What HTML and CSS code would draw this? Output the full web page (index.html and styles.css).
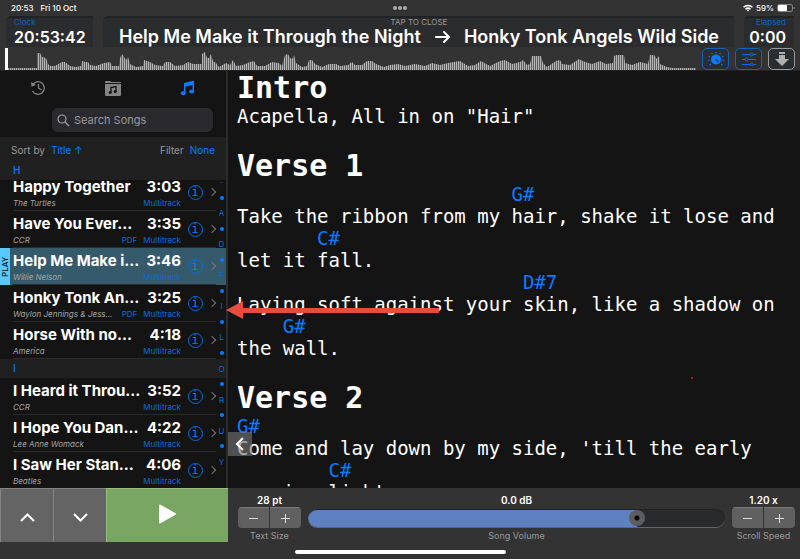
FILE: index.html
```html
<!DOCTYPE html>
<html lang="en">

<head>
    <meta charset="UTF-8">
    <meta name="viewport" content="width=device-width, initial-scale=1.0">
    <title>Songs</title>
    <link rel="stylesheet" href="styles.css">
</head>

<body>
    <header class="top">
        <div class="status">
            <span>20:53</span>
            <span>Fri 10 Oct</span>
            <span class="dots"><i></i><i></i><i></i></span>
            <span class="battery">
                <svg width="10" height="8" viewBox="0 0 20 15" fill="none" stroke="#fff" stroke-width="3">
                    <path d="M1 6a13 13 0 0 1 18 0M5 10a7.500 7.500 0 0 1 10 0" />
                    <path d="M7.500 11.500L10 14.500l2.500-3a4 4 0 0 0-5 0z" fill="#fff" stroke="none" />
                </svg>
                59%
                <svg width="18" height="8" viewBox="0 0 18 8">
                    <rect x=".5" y=".5" width="15" height="7" rx="2" fill="none" stroke="#8a8a8a" />
                    <rect x="1" y="1" width="9" height="6" rx="1" fill="#fff" />
                    <path d="M17 3v2" stroke="#8a8a8a" />
                </svg>
            </span>
        </div>

        <div class="displays">
            <div class="display clock"><small>Clock</small><b>20:53:42</b></div>
            <button class="display now">
                <small>TAP TO CLOSE</small>
                <span class="songs">
                    <b>Help Me Make it Through the Night</b>
                    <svg width="15" height="14" viewBox="0 0 15 14" fill="none" stroke="#fff" stroke-width="2" stroke-linecap="round" stroke-linejoin="round"><path d="M1 7h13M9 2l5 5-5 5" /></svg>
                    <b>Honky Tonk Angels Wild Side</b>
                </span>
            </button>
            <div class="display elapsed"><small>Elapsed</small><b>0:00</b></div>
        </div>

        <div class="wave-row">
            <!-- waveform: an envelope filled with narrow bars -->
            <svg class="wave" viewBox="0 0 696 23" preserveAspectRatio="none">
                <defs>
                    <pattern id="bars" width="2" height="23" patternUnits="userSpaceOnUse">
                        <rect width="2" height="23" fill="#606060" />
                        <rect width="1" height="23" fill="#b4b4b4" />
                    </pattern>
                </defs>
                <path fill="url(#bars)" d="M8 23V21H37V6L40 6 42 10 46 11 48 17 50 19 55 19 62 15 65 15 70 19 76 20 81 19 82 14 85 15 88 15 90 18 96 19 104 16 110 15 112 19 119 19 120 11 122 7 124 10 126 13 128 10 130 17 136 20 143 19 144 13 150 15 155 18 163 19 165 15 170 15 175 19 183 18 188 15 193 17 202 17 202 7 205 5 207 11 209 11 211 7 213 14 216 16 219 20 226 16 230 18 233 13 236 19 243 18 250 15 254 14 257 19 265 19 272 15 279 16 282 19 285 8 288 7 290 11 292 12 294 8 296 16 302 20 307 19 309 13 312 13 315 17 322 20 329 17 336 17 340 19 348 18 352 15 355 18 362 18 367 14 372 14 376 17 384 20 390 18 398 17 405 19 415 17 425 19 432 16 440 18 448 16 460 14 468 19 475 18 481 14 490 19 500 14 505 13 512 17 520 15 523 13 527 18 530 17 532 9 541 9 543 16 547 20 556 14 560 13 562 17 570 18 579 12 585 15 592 17 600 14 606 17 613 16 614 9 617 8 624 8 625 16 632 18 640 15 648 17 650 8 654 8 657 12 659 9 660 17 667 20 672 21 696 21V23z" />
                <rect x="5" y="1" width="3" height="22" fill="#fff" />
            </svg>
            <div class="tools">
                <button class="tool" aria-label="Brightness">
                    <svg width="18" height="16" viewBox="0 0 18 16">
                        <circle cx="9" cy="8.500" r="5" fill="#0a7bff" />
                        <path d="M8.500 8l3 3" stroke="#20405f" stroke-width="1.400" />
                        <g fill="#0a7bff">
                            <circle cx="9" cy="1.500" r=".8" /><circle cx="5" cy="2.500" r=".8" /><circle cx="13" cy="2.500" r=".8" />
                            <circle cx="2.300" cy="5.500" r=".8" /><circle cx="15.700" cy="5.500" r=".8" /><circle cx="1.800" cy="9.500" r=".8" />
                            <circle cx="16.200" cy="9.500" r=".8" /><circle cx="3.300" cy="13.500" r=".8" /><circle cx="14.700" cy="13.500" r=".8" />
                        </g>
                    </svg>
                </button>
                <button class="tool" aria-label="Mixer">
                    <svg width="16" height="14" viewBox="0 0 16 14" fill="#26323f" stroke="#0a6fe6">
                        <path d="M1 2.500h14M1 7.500h14M1 12.500h14" />
                        <circle cx="10.500" cy="2.500" r="1.500" /><circle cx="5.500" cy="7.500" r="1.500" /><circle cx="10.500" cy="12.500" r="1.500" />
                    </svg>
                </button>
                <button class="tool grey" aria-label="Scroll down">
                    <svg width="16" height="16" viewBox="0 0 16 16" fill="#b0b0b0"><path d="M5 1h6v2H5zM5 4h6v4h4l-7 7-7-7h4z" /></svg>
                </button>
            </div>
        </div>
    </header>

    <main class="main">
        <aside class="side">
            <nav class="tabs">
                <button aria-label="History">
                    <svg width="16" height="16" viewBox="0 0 16 16" fill="none" stroke="#858585" stroke-width="1.300"><path d="M2.500 5A6.300 6.300 0 1 1 2.500 11M8.500 4v4l3 2" /><path d="M1 2l.5 4.500L6 5z" fill="#858585" stroke="none" /></svg>
                </button>
                <button aria-label="Set lists">
                    <svg width="16" height="16" viewBox="0 0 16 16"><path d="M0 3V2q0-1 1-1h4l1 1h9q1 0 1 1z" fill="#858585" /><path d="M0 4h16v11q0 1-1 1H1q-1 0-1-1z" fill="#858585" /><path d="M6 12.500V7.500l5-1v5" stroke="#141414" stroke-width="1.300" fill="none" /><circle cx="5.200" cy="12.500" r="1.500" fill="#141414" /><circle cx="10.200" cy="11.500" r="1.500" fill="#141414" /></svg>
                </button>
                <button aria-label="Songs">
                    <svg width="16" height="16" viewBox="0 0 16 16" fill="#0a7bff"><path d="M4 3l10-2.500V11h-1.500V5L5.500 6.600V13H4z" /><ellipse cx="3.200" cy="13.300" rx="2.500" ry="2" /><ellipse cx="11.700" cy="11.500" rx="2.500" ry="2" /></svg>
                </button>
            </nav>
            <label class="search">
                <svg width="13" height="13" viewBox="0 0 13 13" fill="none" stroke="#a0a0a5" stroke-width="1.200"><circle cx="5" cy="5" r="4" /><path d="M8 8l4 4" /></svg>
                <input type="search" placeholder="Search Songs" aria-label="Search Songs">
            </label>
            <div class="sort">
                <span>Sort by</span><button>Title ↑</button>
                <span class="filter">Filter</span><button>None</button>
            </div>
            <h2 class="letter">H</h2>

            <div class="list-wrap">
                <ul class="list">
                    <li class="song">
                        <b class="name">Happy Together</b><b class="time">3:03</b>
                        <em>The Turtles</em><span class="tags">Multitrack</span>
                        <a class="info" href="#" aria-label="Info">i</a><i class="chev"></i>
                    </li>
                    <li class="song">
                        <b class="name">Have You Ever…</b><b class="time">3:35</b>
                        <em>CCR</em><span class="tags"><span>PDF</span>Multitrack</span>
                        <a class="info" href="#" aria-label="Info">i</a><i class="chev"></i>
                    </li>
                    <li class="song active">
                        <button class="play-tab">PLAY</button>
                        <b class="name">Help Me Make i…</b><b class="time">3:46</b>
                        <em>Willie Nelson</em><span class="tags">Multitrack</span>
                        <a class="info" href="#" aria-label="Info">i</a><i class="chev"></i>
                    </li>
                    <li class="song">
                        <b class="name">Honky Tonk An…</b><b class="time">3:25</b>
                        <em>Waylon Jennings &amp; Jess…</em><span class="tags"><span>PDF</span>Multitrack</span>
                        <a class="info" href="#" aria-label="Info">i</a><i class="chev"></i>
                    </li>
                    <li class="song">
                        <b class="name">Horse With no…</b><b class="time">4:18</b>
                        <em>America</em><span class="tags">Multitrack</span>
                        <a class="info" href="#" aria-label="Info">i</a><i class="chev"></i>
                    </li>
                    <li class="letter">I</li>
                    <li class="song">
                        <b class="name">I Heard it Throu…</b><b class="time">3:52</b>
                        <em>CCR</em><span class="tags">Multitrack</span>
                        <a class="info" href="#" aria-label="Info">i</a><i class="chev"></i>
                    </li>
                    <li class="song">
                        <b class="name">I Hope You Dan…</b><b class="time">4:22</b>
                        <em>Lee Anne Womack</em><span class="tags">Multitrack</span>
                        <a class="info" href="#" aria-label="Info">i</a><i class="chev"></i>
                    </li>
                    <li class="song">
                        <b class="name">I Saw Her Stan…</b><b class="time">4:06</b>
                        <em>Beatles</em><span class="tags">Multitrack</span>
                        <a class="info" href="#" aria-label="Info">i</a><i class="chev"></i>
                    </li>
                </ul>
                <div class="index">
                    <span>·</span><i></i><span>A</span><i></i><span>D</span><i></i><span>F</span><i></i><span>I</span><i></i><span>L</span><i></i><span>O</span><i></i><span>R</span><i></i><span>U</span><i></i><span>Y</span>
                </div>
            </div>
        </aside>

        <section class="lyrics">
            <h1>Intro</h1>
            <pre>Acapella, All in on "Hair"</pre>
            <h1>Verse 1</h1>
            <pre><span>                        G#</span>
Take the ribbon from my hair, shake it lose and
<span>       C#</span>
let it fall.
<span>                         D#7</span>
Laying soft against your skin, like a shadow on
<span>    G#</span>
the wall.</pre>
            <h1>Verse 2</h1>
            <pre><span>G#</span>
Come and lay down by my side, 'till the early
<span>        C#</span>
morning light.</pre>
            <button class="collapse" aria-label="Hide song list">
                <svg width="10" height="14" viewBox="0 0 10 14" fill="none" stroke="#fff" stroke-width="2"><path d="M8 1L2 7l6 6" /></svg>
            </button>
            <i class="speck"></i>
        </section>
        <svg class="arrow" width="213" height="18" viewBox="0 0 213 18" fill="#e74c3c"><path d="M0 9L17 0v7h196v5H17v6z" /></svg>
    </main>

    <footer class="bottom">
        <div class="transport">
            <button aria-label="Previous"><svg width="15" height="9" viewBox="0 0 15 9" fill="none" stroke="#fff" stroke-width="2"><path d="M1 8l6.500-6.500L14 8" /></svg></button>
            <button aria-label="Next"><svg width="15" height="9" viewBox="0 0 15 9" fill="none" stroke="#fff" stroke-width="2"><path d="M1 1l6.500 6.500L14 1" /></svg></button>
            <button class="play" aria-label="Play"><svg width="17" height="20" viewBox="0 0 17 20" fill="#fff" stroke="#fff" stroke-width="2" stroke-linejoin="round"><path d="M1 1.500v17L16 10z" /></svg></button>
        </div>
        <div class="controls">
            <div class="control">
                <b>28 pt</b>
                <div class="stepper">
                    <button aria-label="Smaller text"><svg width="11" height="11" viewBox="0 0 11 11" stroke="#ddd"><path d="M1 5.500h9" /></svg></button>
                    <button aria-label="Larger text"><svg width="11" height="11" viewBox="0 0 11 11" stroke="#ddd"><path d="M1 5.500h9M5.500 1v9" /></svg></button>
                </div>
                <small>Text Size</small>
            </div>
            <div class="control volume">
                <b>0.0 dB</b>
                <input type="range" id="volume" min="0" max="100" value="80">
                <label for="volume">Song Volume</label>
            </div>
            <div class="control">
                <b>1.20 x</b>
                <div class="stepper">
                    <button aria-label="Slower"><svg width="11" height="11" viewBox="0 0 11 11" stroke="#ddd"><path d="M1 5.500h9" /></svg></button>
                    <button aria-label="Faster"><svg width="11" height="11" viewBox="0 0 11 11" stroke="#ddd"><path d="M1 5.500h9M5.500 1v9" /></svg></button>
                </div>
                <small>Scroll Speed</small>
            </div>
        </div>
        <i class="home-bar"></i>
    </footer>
</body>
</html>
```

FILE: styles.css
```css
* {
    box-sizing: border-box;
}

body {
    display: flex;
    flex-direction: column;
    height: 100vh;
    margin: 0;
    overflow: hidden;
    background: #141414;
    color: #fff;
    font-family: Inter, "Liberation Sans", sans-serif;
}

button {
    padding: 0;
    border: none;
    background: none;
    color: inherit;
    font: inherit;
}

small {
    font-size: 9px;
}

b {
    font-weight: 600;
}

/* header */
.top {
    background: #333;
    border-bottom: 1px solid #222;
}

.status {
    position: relative;
    display: flex;
    align-items: center;
    gap: 7px;
    height: 16px;
    padding: 0 5px 0 11px;
    font-size: 8px;
    font-weight: 500;
}

.dots {
    position: absolute;
    left: 50%;
    display: flex;
    gap: 1px;
    margin-left: -7px;
}

.dots i {
    width: 4px;
    height: 4px;
    border-radius: 50%;
    background: #aaa;
}

.battery {
    display: flex;
    align-items: center;
    gap: 3px;
    margin-left: auto;
}

.displays {
    display: flex;
    gap: 10px;
    height: 31px;
    padding: 0 6px;
}

.display {
    display: flex;
    flex-direction: column;
    border-top: 2px solid #202224;
    border-left: 1px solid #292b2d;
    border-radius: 5px 0 0 0;
    background: #2b2c2e;
}

.display small {
    height: 9px;
    color: #0b63c4;
    font-size: 8px;
    line-height: 9px;
}

.display b {
    font-size: 16px;
    line-height: 20px;
}

.clock {
    width: 87px;
    padding-left: 7px;
}

.now {
    flex: 1;
    align-items: center;
}

.display.now small {
    color: #999;
}

.songs {
    display: flex;
    align-items: center;
    gap: 14px;
    white-space: nowrap;
}

.display.now b {
    font-size: 18px;
}

.elapsed {
    width: 50px;
    padding-right: 8px;
    text-align: right;
}

.wave-row {
    display: flex;
    height: 23px;
}

.wave {
    flex: 1;
    min-width: 0;
    height: 23px;
}

.tools {
    display: flex;
    gap: 6px;
    padding: 1px 5px 0 6px;
}

.tool {
    display: flex;
    align-items: center;
    justify-content: center;
    width: 27px;
    height: 22px;
    border: 1px solid #1762b8;
    border-radius: 5px;
    background: #2b2e31;
}

.grey {
    border-color: #999;
}

/* song list */
.main {
    position: relative;
    display: flex;
    flex: 1;
    min-height: 0;
}

.side {
    display: flex;
    flex-direction: column;
    width: 228px;
    border-right: 2px solid #2c2c2c;
}

.tabs {
    display: flex;
    justify-content: space-around;
    height: 36px;
    padding-bottom: 3px;
}

.tabs button {
    display: flex;
    align-items: center;
    justify-content: center;
    width: 40px;
}

.search {
    display: flex;
    align-items: center;
    gap: 4px;
    height: 24px;
    margin: 1px 13px 5px 52px;
    padding: 0 5px;
    border-radius: 6px;
    background: #2a2a2e;
}

.search input {
    flex: 1;
    min-width: 0;
    padding: 0;
    border: none;
    outline: none;
    background: none;
    color: #fff;
    font: 11px Inter, sans-serif;
}

.search input::placeholder {
    color: #98989f;
}

.sort {
    display: flex;
    align-items: center;
    gap: 6px;
    height: 24px;
    padding: 2px 11px 0 11px;
    background: #202020;
    color: #999;
    font-size: 10px;
}

.sort button {
    color: #0a7bff;
}

.filter {
    margin-left: auto;
}

.letter {
    flex: none;
    height: 19px;
    margin: 0;
    padding-left: 13px;
    background: #202020;
    color: #0a7bff;
    font-size: 10px;
    font-weight: 500;
    line-height: 19px;
}

.list-wrap {
    position: relative;
    flex: 1;
    overflow: hidden;
}

/* scrolled a little past the first song */
.list {
    margin: -6px 0 0;
    padding: 0;
    list-style: none;
}

.song {
    position: relative;
    display: grid;
    grid-template: 23px 13px / minmax(0, 1fr) 38px 28px 12px;
    height: 37px;
    padding: 0 5px 0 13px;
    white-space: nowrap;
}

.song::after {
    content: "";
    position: absolute;
    right: 10px;
    bottom: 0;
    left: 13px;
    height: 1px;
    background: #2b2b2b;
}

.name,
.time {
    font-size: 15px;
    font-weight: 700;
    line-height: 25px;
}

.time {
    grid-column: 2;
    text-align: right;
}

.song em {
    grid-row: 2;
    grid-column: 1;
    color: #a5a5a5;
    font-size: 8px;
    line-height: 12px;
}

.tags {
    grid-row: 2;
    grid-column: 2;
    justify-self: end;
    color: #0a6bdc;
    font-size: 8px;
    line-height: 12px;
}

.tags span {
    margin-right: 6px;
}

.info {
    grid-row: 1 / 3;
    grid-column: 3;
    place-self: center;
    width: 15px;
    height: 15px;
    border: 1px solid #0a6bdc;
    border-radius: 50%;
    color: #0a7bff;
    font: 12px/13px "DejaVu Sans Mono", monospace;
    text-align: center;
    text-decoration: none;
}

.chev {
    grid-row: 1 / 3;
    grid-column: 4;
    align-self: center;
    width: 6px;
    height: 6px;
    border: solid #777;
    border-width: 1px 1px 0 0;
    transform: rotate(45deg);
}

.active {
    background: #345a6c;
}

.play-tab {
    position: absolute;
    top: 0;
    bottom: 0;
    left: 0;
    width: 10px;
    background: #5ac8fa;
    color: #111;
    font-size: 8px;
    font-weight: 500;
    line-height: 10px;
    writing-mode: vertical-rl;
    transform: rotate(180deg);
}

.index {
    position: absolute;
    top: -4px;
    right: 0;
    display: flex;
    flex-direction: column;
    align-items: center;
    justify-content: space-between;
    width: 9px;
    height: 292px;
    color: #0a6bdc;
    font-size: 8px;
    line-height: 12px;
}

.index i {
    width: 4px;
    height: 4px;
    border-radius: 50%;
    background: #0a7bff;
}

/* lyrics */
.lyrics {
    position: relative;
    flex: 1;
    min-width: 0;
    padding-left: 9px;
    overflow: hidden;
    font-family: "DejaVu Sans Mono", monospace;
}

.lyrics h1 {
    margin: 0;
    font-size: 30px;
    line-height: 34px;
}

.lyrics pre {
    margin: 0 0 22px;
    font: 19px/22px "DejaVu Sans Mono", monospace;
}

.lyrics pre span {
    color: #0a7bff;
}

.collapse {
    position: absolute;
    bottom: 32px;
    left: 0;
    display: flex;
    align-items: center;
    justify-content: center;
    width: 24px;
    height: 24px;
    background: rgba(120, 120, 120, 0.6);
}

.arrow {
    position: absolute;
    top: 230px;
    left: 226px;
}

.speck {
    position: absolute;
    top: 306px;
    left: 463px;
    width: 2px;
    height: 2px;
    background: #a02020;
}

/* transport and sliders */
.bottom {
    position: relative;
    display: flex;
    height: 71px;
    background: #333;
}

.transport {
    display: flex;
    width: 228px;
    height: 54px;
}

.transport button {
    width: 53px;
    border: 1px solid #858585;
    border-width: 1px 0 0 1px;
    background: #646464;
}

.transport .play {
    flex: 1;
    border-color: #98bd80;
    background: #79a662;
}

.controls {
    display: flex;
    flex: 1;
    gap: 7px;
    padding: 6px 5px 0 10px;
}

.control {
    display: flex;
    flex-direction: column;
    align-items: center;
    width: 63px;
    white-space: nowrap;
}

.control b {
    height: 13px;
    font-size: 10px;
    line-height: 13px;
}

.control small,
.control label {
    color: #999;
    font-size: 9px;
    line-height: 15px;
}

.stepper {
    display: flex;
    gap: 1px;
    width: 63px;
    height: 21px;
    overflow: hidden;
    border-radius: 4px;
}

.stepper button {
    display: flex;
    flex: 1;
    align-items: center;
    justify-content: center;
    border-top: 1px solid #777;
    background: #606060;
}

.volume {
    flex: 1;
}

.volume input {
    appearance: none;
    width: 100%;
    height: 18px;
    margin: 2px 0 1px;
    border-radius: 9px;
    background: linear-gradient(90deg, #5d81c3 79%, #292a2c 79%);
    box-shadow: 0 1px #666, inset 0 1px #222;
}

.volume input::-webkit-slider-thumb {
    appearance: none;
    width: 16px;
    height: 16px;
    border-radius: 50%;
    background: radial-gradient(circle, #000 2px, #5b5d60 3px);
}

.home-bar {
    position: absolute;
    bottom: 5px;
    left: 50%;
    width: 211px;
    height: 4px;
    margin-left: -105px;
    border-radius: 2px;
    background: #fff;
}
```
